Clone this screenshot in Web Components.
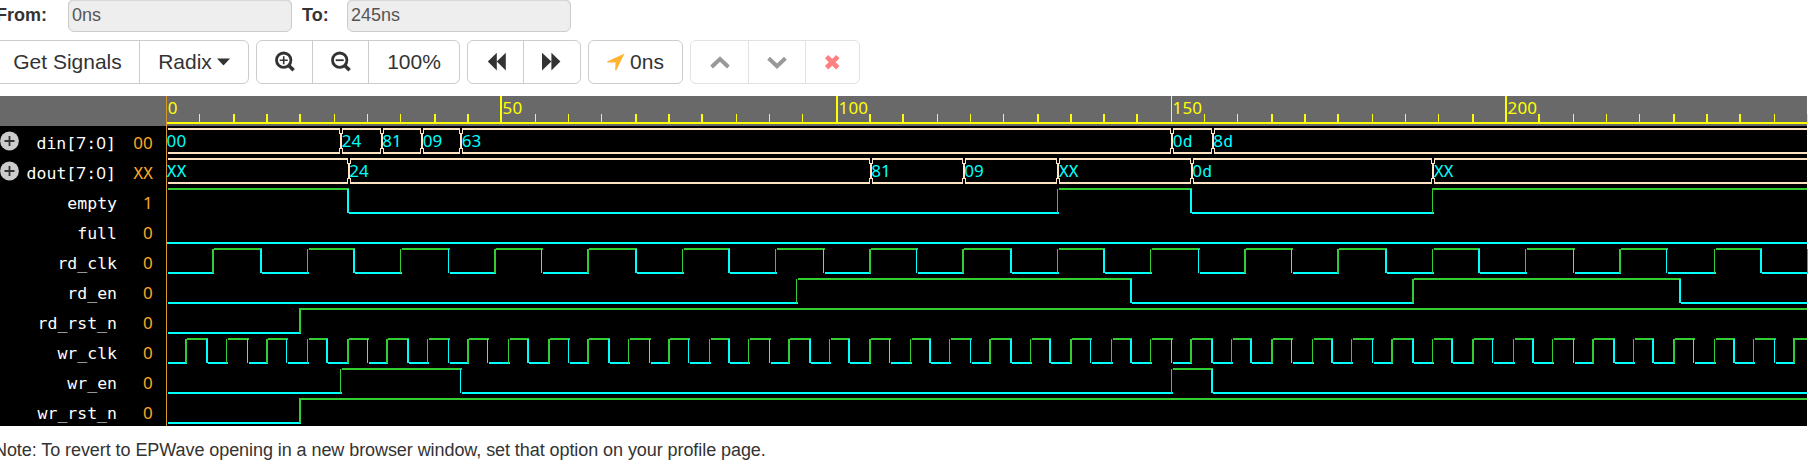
<!DOCTYPE html>
<html lang="en">
<head>
<meta charset="utf-8">
<title>EPWave</title>
<style>
html, body { margin: 0; background: #fff; overflow: hidden; }
body { font-family: "Liberation Sans", Arial, sans-serif; color: #333; }
</style>
</head>
<body>
<ep-app></ep-app>
<script>
function shadow(el, html) {
  const root = el.attachShadow({ mode: "open" });
  const t = document.createElement("template");
  t.innerHTML = html;
  root.appendChild(t.content.cloneNode(true));
  return root;
}

const ICONS = {
  caret: '<svg width="13" height="8" viewBox="0 0 13 8"><path d="M0 0.6H13L6.5 7.6Z" fill="#333"/></svg>',
  plus: '<svg width="22" height="22" viewBox="0 0 22 22"><g fill="none" stroke="#333"><circle cx="9.7" cy="9.2" r="7.2" stroke-width="2.8"/><path d="M15 14.8L19.6 19.2" stroke-width="3.6"/><path d="M5.7 9.2h8M9.7 5.2v8" stroke-width="1.6"/></g></svg>',
  minus: '<svg width="22" height="22" viewBox="0 0 22 22"><g fill="none" stroke="#333"><circle cx="9.7" cy="9.2" r="7.2" stroke-width="2.8"/><path d="M15 14.8L19.6 19.2" stroke-width="3.6"/><path d="M5.7 9.2h8" stroke-width="1.8"/></g></svg>',
  back: '<svg width="22" height="20" viewBox="0 0 22 20"><path d="M2.8 9.6L11.8 0.8V9.6L20.8 0.8V18.4L11.8 9.6V18.4Z" fill="#333"/></svg>',
  fwd: '<svg width="22" height="20" viewBox="0 0 22 20"><path d="M19.4 9.6L10.4 0.8V9.6L1 0.8V18.4L10.4 9.6V18.4Z" fill="#333"/></svg>',
  cursor: '<svg width="18" height="18" viewBox="0 0 18 18"><path d="M17.6 0.4L9.2 17.4L8.1 17L8.6 9.6L0.4 9.6L0.2 8.6Z" fill="#ffb330"/></svg>',
  up: '<svg width="22" height="16" viewBox="0 0 22 16"><path d="M2.6 13L11 5L19.4 13" fill="none" stroke="#999" stroke-width="4"/></svg>',
  down: '<svg width="22" height="16" viewBox="0 0 22 16"><path d="M2.6 4.2L11 12.2L19.4 4.2" fill="none" stroke="#999" stroke-width="4"/></svg>',
  cross: '<svg width="18" height="18" viewBox="0 0 18 18"><path d="M2.6 3.6L13.8 14.8M13.8 3.6L2.6 14.8" fill="none" stroke="#ff8080" stroke-width="4.8"/></svg>'
};

customElements.define("ep-icon", class extends HTMLElement {
  constructor() {
    super();
    shadow(this, `<style>:host{display:inline-flex;flex:none}svg{display:block}</style>${ICONS[this.getAttribute("name")]}`);
  }
});

customElements.define("ep-field", class extends HTMLElement {
  constructor() {
    super();
    shadow(this, `<style>
      :host{display:flex;height:33px;font-size:18px;line-height:20px}
      b{display:block;width:var(--label);padding-top:6px;box-sizing:border-box;white-space:nowrap}
      span{display:block;box-sizing:border-box;width:224px;height:33px;padding:5px 0 0 3px;border:1px solid #ccc;border-radius:6px;background:#eee;color:#555;box-shadow:inset 0 1px 1px rgba(0,0,0,.1)}
    </style><b>${this.getAttribute("label")}</b><span><slot></slot></span>`);
  }
});

customElements.define("ep-button", class extends HTMLElement {
  constructor() {
    super();
    shadow(this, `<style>
      :host{display:flex;align-items:center;justify-content:center;gap:5px;box-sizing:border-box;height:42px;
        font-size:21px;line-height:24px;white-space:nowrap}
      :host(:not(:first-child)){border-left:1px solid var(--line,#ccc)}
    </style><slot></slot>`);
  }
});

customElements.define("ep-group", class extends HTMLElement {
  constructor() {
    super();
    shadow(this, `<style>
      :host{display:flex;box-sizing:border-box;height:44px;border:1px solid var(--line,#ccc);border-radius:6px;background:#fff}
      :host([muted]){--line:#e2e2e2}
    </style><slot></slot>`);
  }
});

customElements.define("ep-toolbar", class extends HTMLElement {
  constructor() {
    super();
    shadow(this, `<style>
      :host{display:flex;gap:7px;margin-left:-8px;height:44px}
    </style>
    <ep-group><ep-button style="width:146px;padding-left:3px;box-sizing:border-box">Get Signals</ep-button><ep-button style="width:109px">Radix <ep-icon name="caret"></ep-icon></ep-button></ep-group>
    <ep-group><ep-button style="width:55px"><ep-icon name="plus"></ep-icon></ep-button><ep-button style="width:56px"><ep-icon name="minus"></ep-icon></ep-button><ep-button style="width:91px">100%</ep-button></ep-group>
    <ep-group><ep-button style="width:55px"><ep-icon name="back"></ep-icon></ep-button><ep-button style="width:57px"><ep-icon name="fwd"></ep-icon></ep-button></ep-group>
    <ep-group><ep-button style="width:93px"><ep-icon name="cursor"></ep-icon>0ns</ep-button></ep-group>
    <ep-group muted><ep-button style="width:57px"><ep-icon name="up"></ep-icon></ep-button><ep-button style="width:57px"><ep-icon name="down"></ep-icon></ep-button><ep-button style="width:54px"><ep-icon name="cross"></ep-icon></ep-button></ep-group>`);
  }
});

/* Digits are set in a proportional face with plain zeros, spaced to the monospace grid. */
const MONO = `
  .m{font-family:"DejaVu Sans Mono",monospace;font-size:16.5px;white-space:pre}
  .d{font-family:"Noto Sans",sans-serif;font-size:17px;letter-spacing:.21px;line-height:0}`;
const runs = (s, tag) => s.replace(/\d+/g, n => `<${tag} class="d">${n}</${tag}>`);

customElements.define("ep-signal", class extends HTMLElement {
  constructor() {
    super();
    const bus = this.hasAttribute("bus");
    shadow(this, `<style>
      :host{display:flex;align-items:center;height:30px;box-sizing:border-box}
      .x{width:20px;height:30px;flex:none}
      .n,.v{line-height:30px;height:30px;text-align:right;padding-top:3px;box-sizing:border-box}
      .n{width:${bus ? 96 : 97}px;color:#fff}.v{width:${bus ? 37 : 36}px;color:#ffa726}
      ${MONO}
    </style>
    <div class="x">${bus ? '<svg width="20" height="30"><circle cx="9.5" cy="15" r="9.4" fill="#ccc"/><path d="M4.5 15h10M9.5 10v10" stroke="#333" stroke-width="1.8"/></svg>' : ""}</div>
    <div class="n m">${runs(this.getAttribute("name"), "span")}</div><div class="v m">${runs(this.getAttribute("value"), "span")}</div>`);
  }
});

const SIGNALS = [
  { name: "din[7:0]", value: "00", bus: [[0, "00"], [26, "24"], [32, "81"], [38, "09"], [44, "63"], [150, "0d"], [156, "8d"]] },
  { name: "dout[7:0]", value: "XX", bus: [[0, "XX"], [27, "24"], [105, "81"], [119, "09"], [133, "XX"], [153, "0d"], [189, "XX"]] },
  { name: "empty", value: "1", start: 1, edges: [27, 133, 153, 189] },
  { name: "full", value: "0", start: 0, edges: [] },
  { name: "rd_clk", value: "0", start: 0, edges: Array.from({ length: 35 }, (_, i) => (i + 1) * 7) },
  { name: "rd_en", value: "0", start: 0, edges: [94, 144, 186, 226] },
  { name: "rd_rst_n", value: "0", start: 0, edges: [20] },
  { name: "wr_clk", value: "0", start: 0, edges: Array.from({ length: 81 }, (_, i) => (i + 1) * 3) },
  { name: "wr_en", value: "0", start: 0, edges: [26, 44, 150, 156] },
  { name: "wr_rst_n", value: "0", start: 0, edges: [20] }
];

const LEFT = 166, END = 1807 - LEFT;
/* Time in ns to a half-pixel position, snapped to the 1.5px unit grid. */
const pos = t => Math.round(111 + t * 4.4655) * 1.5 - LEFT;
const rect = (x, y, w, h, f) => `<rect x="${x}" y="${y}" width="${w}" height="${h}" fill="${f}"/>`;
const vline = (p, y, h, f) => Number.isInteger(p) ? rect(p - 1, y, 2, h, f) : rect(Math.floor(p), y, 1, h, f);
const label = (x, y, s, f) => `<text class="m" x="${x}" y="${y}" fill="${f}">${runs(s, "tspan")}</text>`;

function ruler() {
  let o = rect(0, 0, END, 30, "#696969") + rect(1, 26, END - 1, 2, "#ff0");
  for (let t = 5; t <= 245; t += 5) {
    const major = t % 50 === 0;
    o += vline(pos(t), major ? 0 : 18, major ? 28 : 10, "#ff0");
    if (major) o += label(Math.floor(pos(t)) + 1.5, 18, String(t), "#ff0");
  }
  return o + label(1.7, 18, "0", "#ff0");
}

function busWave(list, y) {
  const c = "#ffe4c4";
  let o = "";
  list.forEach(([t, v], i) => {
    const last = i === list.length - 1;
    const x1 = i ? Math.floor(pos(t)) + 2 : 2;
    const x2 = last ? END : Math.floor(pos(list[i + 1][0]));
    o += rect(x1, y + 2, x2 - x1, 2, c) + rect(x1, y + 26, x2 - x1, 2, c);
    if (i) {
      const l = Math.floor(pos(t)) - 1;
      for (const [dx, a, b] of [[0, 3, 8], [0, 22, 27], [1, 7, 23], [2, 10, 20], [2, 7, 10], [2, 20, 23], [3, 3, 8], [3, 22, 27]])
        o += rect(l + dx, y + a, 1, b - a, c);
    }
    o += label(i ? pos(t) + 1.2 : 0.5, y + 21, v, "#0ff");
  });
  return o;
}

function bitWave(s, y) {
  const col = l => l ? "#32cd32" : "#0ff";
  let o = "", level = s.start, from = s.edges.length ? 2 : 1;
  s.edges.forEach((t, i) => {
    const p = pos(t), q = Math.floor(p + 1.5);
    o += rect(from, y + (level ? 2 : 26), q - from, 2, col(level));
    level = 1 - level;
    o += vline(p, y + 3, 24, col(level));
    from = i === s.edges.length - 1 && level ? Math.ceil(p) - 1 : q;
  });
  if (from < END) o += rect(from, y + (level ? 2 : 26), END - from, 2, col(level));
  return o;
}

customElements.define("ep-wave", class extends HTMLElement {
  constructor() {
    super();
    let g = ruler();
    SIGNALS.forEach((s, i) => { g += s.bus ? busWave(s.bus, 30 + i * 30) : bitWave(s, 30 + i * 30); });
    shadow(this, `<style>
      :host{display:flex;width:1808px;height:330px}
      .names{width:166px;height:330px;background:#000;flex:none}
      .head{height:30px;background:#696969}
      svg{display:block;flex:none}
      rect{shape-rendering:crispEdges}
      ${MONO}
    </style>
    <div class="names"><div class="head"></div>${SIGNALS.map(s => `<ep-signal name="${s.name}" value="${s.value}" ${s.bus ? "bus" : ""}></ep-signal>`).join("")}</div>
    <svg width="1642" height="330">${rect(0, 30, END, 300, "#000")}<g>${g}</g>${rect(0, 0, 1, 330, "#d9962e")}</svg>`);
  }
});

customElements.define("ep-app", class extends HTMLElement {
  constructor() {
    super();
    shadow(this, `<style>
      :host{display:block;width:1812px;height:475px;overflow:hidden;background:#fff}
      .fields{display:flex;gap:10px;margin:-1px 0 8px -4px}
      ep-wave{margin-top:12px}
      p{margin:12px 0 0 -6px;font-size:18px;line-height:24px;letter-spacing:-.07px;white-space:nowrap}
    </style>
    <div class="fields"><ep-field label="From:" style="--label:72px">0ns</ep-field><ep-field label="To:" style="--label:45px">245ns</ep-field></div>
    <ep-toolbar></ep-toolbar>
    <ep-wave></ep-wave>
    <p>Note: To revert to EPWave opening in a new browser window, set that option on your profile page.</p>`);
  }
});
</script>
</body>
</html>
